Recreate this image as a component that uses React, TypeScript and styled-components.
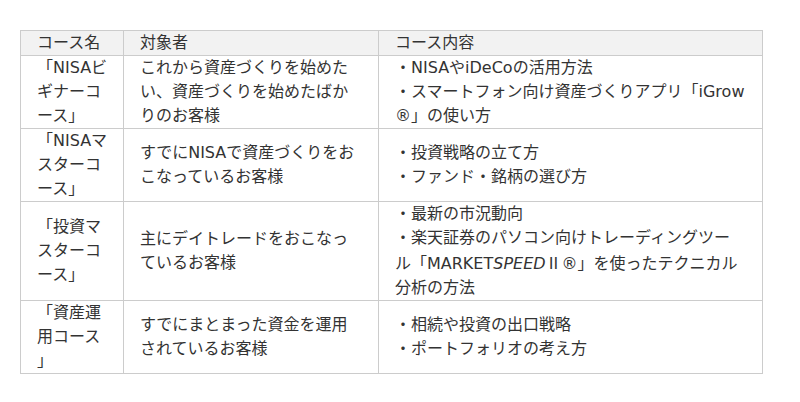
import React from "react";
import styled, { createGlobalStyle } from "styled-components";

const Global = createGlobalStyle`
  html, body { margin: 0; padding: 0; background: #fff; }
  body { font-family: "DejaVu Sans", "Noto Sans CJK JP", sans-serif; }
`;

const Page = styled.div`
  padding: 30px 20px 0 20px;
`;

const Table = styled.table`
  border-collapse: collapse;
  table-layout: fixed;
  width: 742px;
  font-size: 16px;
  line-height: 24px;
  color: #333;
  text-spacing-trim: space-all;
`;

const Th = styled.th`
  background: #f2f2f2;
  border: 1px solid #ccc;
  padding: 0 16px;
  font-weight: normal;
  text-align: left;
  vertical-align: middle;
`;

const Td = styled.td<{ $pr?: number }>`
  border: 1px solid #ccc;
  padding: 0 ${(p) => p.$pr ?? 16}px 0 16px;
  vertical-align: middle;
  word-break: break-all;
  line-break: anywhere;
`;

const Line = styled.div``;

const Ital = styled.i`
  font-style: italic;
`;

const Numeral = styled.span`
  font-family: "Noto Sans CJK JP", sans-serif;
`;

type Row = { name: string; target: string; items: React.ReactNode[] };

const rows: Row[] = [
  {
    name: "「NISAビギナーコース」",
    target: "これから資産づくりを始めたい、資産づくりを始めたばかりのお客様",
    items: ["・NISAやiDeCoの活用方法", "・スマートフォン向け資産づくりアプリ「iGrow®」の使い方"],
  },
  {
    name: "「NISAマスターコース」",
    target: "すでにNISAで資産づくりをおこなっているお客様",
    items: ["・投資戦略の立て方", "・ファンド・銘柄の選び方"],
  },
  {
    name: "「投資マスターコース」",
    target: "主にデイトレードをおこなっているお客様",
    items: [
      "・最新の市況動向",
      <>
        ・楽天証券のパソコン向けトレーディングツール「MARKET<Ital>SPEED</Ital>
        <Numeral>Ⅱ</Numeral>®」を使ったテクニカル分析の方法
      </>,
    ],
  },
  {
    name: "「資産運用コース」",
    target: "すでにまとまった資金を運用されているお客様",
    items: ["・相続や投資の出口戦略", "・ポートフォリオの考え方"],
  },
];

export default function App() {
  return (
    <>
      <Global />
      <Page>
        <Table>
          <colgroup>
            <col style={{ width: 103 }} />
            <col style={{ width: 255 }} />
            <col style={{ width: 384 }} />
          </colgroup>
          <thead>
            <tr>
              <Th>コース名</Th>
              <Th>対象者</Th>
              <Th>コース内容</Th>
            </tr>
          </thead>
          <tbody>
            {rows.map((r, i) => (
              <tr key={i}>
                <Td $pr={12}>{r.name}</Td>
                <Td>{r.target}</Td>
                <Td $pr={17}>
                  {r.items.map((it, j) => (
                    <Line key={j}>{it}</Line>
                  ))}
                </Td>
              </tr>
            ))}
          </tbody>
        </Table>
      </Page>
    </>
  );
}
